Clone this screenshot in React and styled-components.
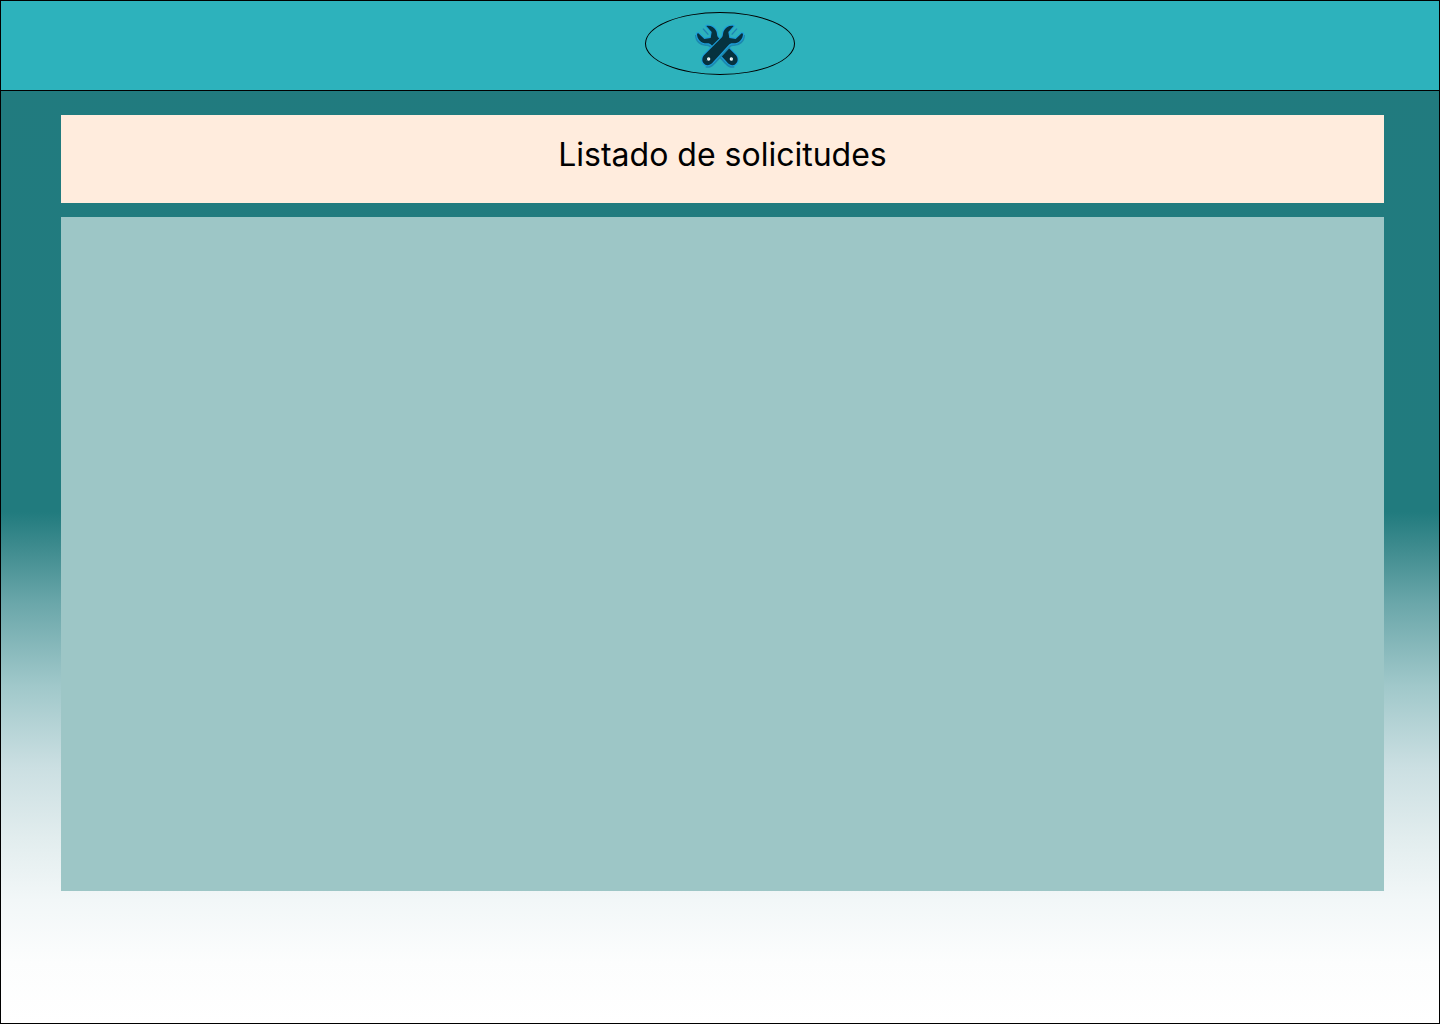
import React from "react";
import styled, { createGlobalStyle } from "styled-components";

const GlobalStyle = createGlobalStyle`
  *, *::before, *::after { box-sizing: border-box; }
  body { margin: 0; font-family: Inter, "Liberation Sans", sans-serif; color: #000; }
`;

const Page = styled.div`
  display: flex;
  flex-direction: column;
  min-height: 100vh;
  border: 1px solid #000;
  background: linear-gradient(
    to bottom,
    #217b7f 0%,
    #217b7e 50%,
    #3a898c 53%,
    #6ba7aa 59%,
    #a0c8ca 67%,
    #cbdfe2 75%,
    #e2edee 82%,
    #f2f7f8 88%,
    #fcfdfd 94%,
    #fff 100%
  );
`;

const Header = styled.header`
  display: flex;
  justify-content: center;
  align-items: flex-start;
  height: 90px;
  padding-top: 11px;
  background: #2db2bc;
  border-bottom: 1px solid #000;
`;

const Emblem = styled.div`
  display: flex;
  justify-content: center;
  align-items: center;
  width: 150px;
  height: 63px;
  padding-top: 4px;
  border: 1px solid #000;
  border-radius: 50%;
`;

const Main = styled.main`
  flex: 1;
  display: flex;
  flex-direction: column;
  gap: 14px;
  padding: 24px 55px 132px 60px;
`;

const TitleBar = styled.div`
  height: 88px;
  padding-top: 20px;
  background: #ffecdd;
  text-align: center;
`;

const Title = styled.h1`
  margin: 0;
  font-size: 32px;
  font-weight: 400;
  line-height: 40px;
`;

const RequestList = styled.section`
  flex: 1;
  background: #9dc6c6;
`;

const WRENCH =
  "M192 149 L246 95 C250 90 248 84 251 77 C256 65 268 59 281 61 L265 79 L268 97 L287 100 L305 83 L309 84 C309 102 295 114 278 113 C272 113 269 115 266 118 L220 168 C214 176 204 181 196 177 C186 172 184 158 192 149 Z";

function Wrench() {
  return (
    <g strokeLinejoin="round">
      <path
        d="M309 84 C309 102 295 114 278 113 C272 113 269 115 266 118 L220 168 C214 176 204 181 196 177"
        transform="translate(2 4)"
        fill="none"
        stroke="#1c88ae"
        strokeWidth="8"
      />
      <path d={WRENCH} fill="#06323f" stroke="#1b9edb" strokeWidth="7" />
      <path d="M291 69 L275 87" fill="none" stroke="#1c80b4" strokeWidth="4" />
      <path d={WRENCH} fill="#06323f" />
      <circle cx="206" cy="160" r="5" fill="#f5ffff" />
      <path d="M201 164 L208 157" stroke="#b2c6c8" strokeWidth="2" />
    </g>
  );
}

function CrossedWrenches() {
  return (
    <svg width="52" height="46" viewBox="162 52 156 138" aria-hidden="true">
      <g transform="translate(480 0) scale(-1 1)">
        <Wrench />
      </g>
      <Wrench />
    </svg>
  );
}

export default function App() {
  return (
    <>
      <GlobalStyle />
      <Page>
        <Header>
          <Emblem>
            <CrossedWrenches />
          </Emblem>
        </Header>
        <Main>
          <TitleBar>
            <Title>Listado de solicitudes</Title>
          </TitleBar>
          <RequestList aria-label="Listado de solicitudes" />
        </Main>
      </Page>
    </>
  );
}
